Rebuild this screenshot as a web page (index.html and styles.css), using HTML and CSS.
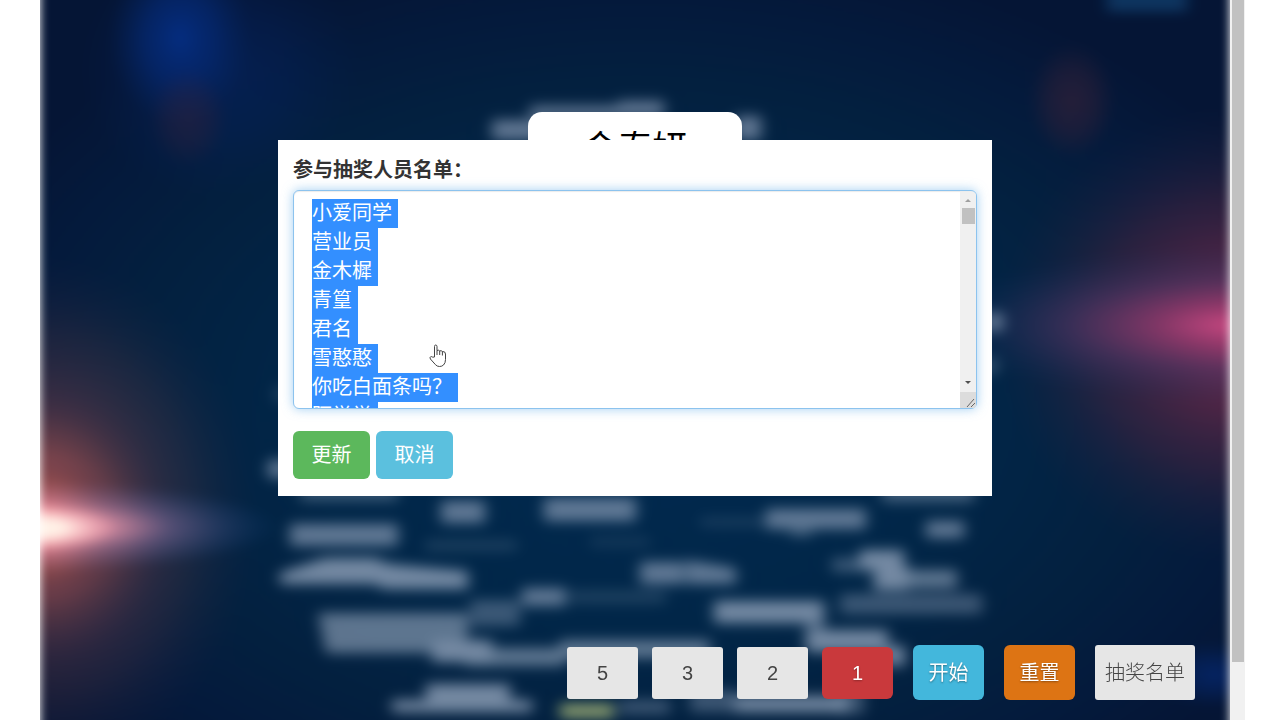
FILE: index.html
```html
<!DOCTYPE html>
<html lang="zh-CN">
<head>
    <meta charset="utf-8">
    <title>抽奖</title>
    <link rel="stylesheet" href="styles.css">
</head>
<body>

<div class="page">
    <main class="stage">
        <div class="scene">
            <svg class="scene-art" viewBox="40 -20 1190 760" preserveAspectRatio="none" aria-hidden="true">
                <defs>
                    <filter id="soft" x="-10%" y="-10%" width="120%" height="120%">
                        <feGaussianBlur stdDeviation="6 5"/>
                    </filter>
                    <radialGradient id="sky" cx="0.5" cy="0.57" r="0.62">
                        <stop offset="0" stop-color="#012a50"/>
                        <stop offset="0.45" stop-color="#012648"/>
                        <stop offset="0.7" stop-color="#03203f"/>
                        <stop offset="0.85" stop-color="#041a3c"/>
                        <stop offset="1" stop-color="#051535"/>
                    </radialGradient>
                    <radialGradient id="blue">
                        <stop offset="0" stop-color="#052d80"/>
                        <stop offset="0.5" stop-color="#052870" stop-opacity="0.7"/>
                        <stop offset="1" stop-color="#052560" stop-opacity="0"/>
                    </radialGradient>
                    <radialGradient id="rust">
                        <stop offset="0" stop-color="#3a2238" stop-opacity="0.6"/>
                        <stop offset="0.5" stop-color="#3a2238" stop-opacity="0.4"/>
                        <stop offset="1" stop-color="#3a2238" stop-opacity="0"/>
                    </radialGradient>
                    <radialGradient id="ember">
                        <stop offset="0" stop-color="#ff7a68"/>
                        <stop offset="0.2" stop-color="#e0685c" stop-opacity="0.8"/>
                        <stop offset="0.4" stop-color="#a85050" stop-opacity="0.6"/>
                        <stop offset="0.7" stop-color="#704045" stop-opacity="0.35"/>
                        <stop offset="1" stop-color="#302844" stop-opacity="0"/>
                    </radialGradient>
                    <radialGradient id="streak">
                        <stop offset="0" stop-color="#ff9cb0"/>
                        <stop offset="0.3" stop-color="#d07890" stop-opacity="0.8"/>
                        <stop offset="0.55" stop-color="#6c5584" stop-opacity="0.5"/>
                        <stop offset="1" stop-color="#1c3c74" stop-opacity="0"/>
                    </radialGradient>
                    <radialGradient id="core">
                        <stop offset="0" stop-color="#fffaf0"/>
                        <stop offset="0.4" stop-color="#ffeee4"/>
                        <stop offset="1" stop-color="#ff9cac" stop-opacity="0"/>
                    </radialGradient>
                    <radialGradient id="rose">
                        <stop offset="0" stop-color="#902c54"/>
                        <stop offset="0.3" stop-color="#682848" stop-opacity="0.75"/>
                        <stop offset="0.6" stop-color="#4a2440" stop-opacity="0.5"/>
                        <stop offset="1" stop-color="#1c2040" stop-opacity="0"/>
                    </radialGradient>
                    <radialGradient id="beam">
                        <stop offset="0" stop-color="#c84880"/>
                        <stop offset="0.25" stop-color="#a04078" stop-opacity="0.65"/>
                        <stop offset="0.55" stop-color="#503868" stop-opacity="0.55"/>
                        <stop offset="1" stop-color="#14305c" stop-opacity="0"/>
                    </radialGradient>
                </defs>

                <rect x="40" y="-20" width="1190" height="760" fill="url(#sky)"/>
                <ellipse cx="220" cy="70" rx="140" ry="130" fill="url(#blue)" opacity="0.35"/>
                <ellipse cx="180" cy="38" rx="72" ry="88" fill="url(#blue)"/>
                <ellipse cx="188" cy="118" rx="40" ry="50" fill="url(#rust)" opacity="0.7"/>
                <ellipse cx="1072" cy="101" rx="44" ry="58" fill="url(#rust)"/>
                <ellipse cx="1215" cy="675" rx="60" ry="34" fill="url(#blue)" opacity="0.6"/>
                <rect x="1107" y="-14" width="80" height="26" fill="#113560" filter="url(#soft)"/>

                <ellipse cx="40" cy="515" rx="220" ry="260" fill="url(#ember)" opacity="0.6"/>
                <ellipse cx="40" cy="525" rx="130" ry="140" fill="url(#ember)" opacity="0.7"/>
                <ellipse cx="40" cy="527" rx="84" ry="70" fill="url(#ember)"/>
                <ellipse class="light" cx="40" cy="527" rx="240" ry="46" fill="url(#streak)"/>
                <ellipse cx="30" cy="528" rx="88" ry="24" fill="url(#core)"/>
                <ellipse cx="1240" cy="335" rx="250" ry="230" fill="url(#rose)"/>
                <ellipse cx="1235" cy="325" rx="300" ry="80" fill="url(#beam)"/>

                <!-- names floating on the sphere -->
                <g fill="#8ea0b8" filter="url(#soft)">
                    <g opacity="0.68">
                        <rect x="492" y="120" width="50" height="20"/>
                        <rect x="530" y="106" width="90" height="12"/>
                        <rect x="618" y="101" width="46" height="16"/>
                        <rect x="735" y="116" width="26" height="24"/>
                        <rect x="985" y="313" width="18" height="18"/>
                        <rect x="985" y="358" width="12" height="16" opacity="0.6"/>
                        <rect x="268" y="460" width="20" height="18"/>
                        <rect x="275" y="386" width="10" height="16" opacity="0.4"/>
                        <rect x="290" y="524" width="108" height="22"/>
                        <rect x="300" y="486" width="98" height="15" opacity="0.6"/>
                        <rect x="441" y="501" width="44" height="22"/>
                        <rect x="544" y="498" width="92" height="23"/>
                        <rect x="766" y="509" width="100" height="20"/>
                        <rect x="790" y="525" width="22" height="12" opacity="0.6"/>
                        <rect x="882" y="484" width="92" height="18" opacity="0.7"/>
                        <rect x="926" y="521" width="38" height="17"/>
                        <rect x="640" y="562" width="44" height="22"/>
                        <path d="M686 560l50 8v16h-50z"/>
                        <rect x="522" y="588" width="44" height="18"/>
                    </g>
                    <g opacity="0.82">
                        <path d="M280 573l45-15h55v26h-100z"/>
                        <path d="M368 560l30 5 70 6v18h-85l-15-10z"/>
                        <rect x="860" y="550" width="44" height="18"/>
                        <rect x="874" y="566" width="34" height="24"/>
                        <rect x="905" y="570" width="52" height="18" opacity="0.8"/>
                        <rect x="714" y="601" width="110" height="22"/>
                        <rect x="806" y="620" width="18" height="20" opacity="0.6"/>
                        <path d="M318 613h150v24l-22 16H326z" opacity="0.8"/>
                        <rect x="432" y="640" width="60" height="22"/>
                        <rect x="465" y="648" width="100" height="18" opacity="0.8"/>
                        <rect x="560" y="640" width="150" height="18" opacity="0.8"/>
                        <rect x="806" y="630" width="82" height="22"/>
                        <rect x="885" y="646" width="20" height="20"/>
                        <rect x="426" y="684" width="84" height="24"/>
                        <rect x="392" y="700" width="140" height="12"/>
                        <rect x="735" y="696" width="112" height="16"/>
                    </g>
                    <g opacity="0.42">
                        <rect x="840" y="594" width="142" height="20"/>
                        <rect x="832" y="558" width="40" height="14"/>
                        <rect x="470" y="600" width="50" height="26"/>
                        <rect x="425" y="540" width="92" height="11" opacity="0.5"/>
                        <rect x="590" y="536" width="60" height="12" opacity="0.3"/>
                        <rect x="570" y="590" width="96" height="14" opacity="0.5"/>
                        <rect x="700" y="517" width="66" height="10" opacity="0.4"/>
                        <rect x="620" y="700" width="50" height="14"/>
                        <rect x="690" y="690" width="46" height="22"/>
                        <rect x="838" y="690" width="26" height="24"/>
                    </g>
                    <rect x="560" y="704" width="54" height="14" fill="#8ea070"/>
                </g>
            </svg>
        </div>

        <div class="winner">金泰妍</div>

        <form class="dialog">
            <label for="names">参与抽奖人员名单：</label>
            <div class="names-box">
                <textarea id="names" class="names" spellcheck="false">小爱同学
营业员
金木樨
青篁
君名
雪憨憨
你吃白面条吗？
陌学学
</textarea>
                <div class="bar" aria-hidden="true">
                    <span class="arrow-up"></span>
                    <span class="thumb"></span>
                    <span class="arrow-down"></span>
                    <svg class="grip" viewBox="0 0 16 16"><path d="M7 15l7-8M11 15l4-4" fill="none" stroke="#666"/></svg>
                </div>
            </div>
            <div class="dialog-buttons">
                <button type="button" class="btn btn-update">更新</button>
                <button type="button" class="btn btn-cancel">取消</button>
            </div>
        </form>

        <svg class="pointer" viewBox="0 0 18 24" aria-hidden="true">
            <path d="M5.500 13V2.500q0-1.500 1.200-1.500t1.300 1.500V6.500q1.500-.8 2.700.4 1.500-.7 2.700.6 3-.3 3.100 2.500V15.500q0 3.500-2 5.500-1.500 1.500-4 1.500t-4-1.800L1.400 15q-.9-1.600.2-2.200t2.200.4z" fill="#fff" stroke="#444"/>
            <path d="M8 6.500v4.500M10.700 7v4M13.400 7.500v4" fill="none" stroke="#444"/>
        </svg>

        <div class="tools">
            <div class="counts">
                <button type="button" class="count">5</button>
                <button type="button" class="count">3</button>
                <button type="button" class="count">2</button>
                <button type="button" class="count active">1</button>
            </div>
            <button type="button" class="tool start">开始</button>
            <button type="button" class="tool reset">重置</button>
            <button type="button" class="tool list">抽奖名单</button>
        </div>
    </main>
    <div class="page-bar" aria-hidden="true"><span></span></div>
</div>

<script>
    var names = document.getElementById('names');
    names.focus();
    names.select();
    names.scrollTop = 0;
</script>
</body>
</html>
```
FILE: styles.css
```css
* {
    box-sizing: border-box;
}

body {
    margin: 0;
    background: #fff;
}

body, button, textarea {
    font-family: "Liberation Sans", "Noto Sans CJK SC", sans-serif;
    font-size: 20px;
    line-height: 28px;
}

.page {
    display: flex;
    min-height: 100vh;
    padding: 0 35px 0 40px;
}

.stage {
    position: relative;
    flex: 1;
    display: flex;
    flex-direction: column;
    align-items: center;
    overflow: hidden;
}

/* blurred backdrop */
.scene {
    position: absolute;
    top: -20px;
    right: 0;
    bottom: -20px;
    left: 0;
    filter: blur(5px);
}

.scene-art {
    display: block;
    width: 100%;
    height: 100%;
}

.light {
    mix-blend-mode: screen;
}

.winner {
    position: relative;
    width: 214px;
    height: 76px;
    margin-top: 112px;
    border-radius: 14px;
    background: #fff;
    color: #000;
    font-size: 35px;
    line-height: 74px;
    text-align: center;
}

/* name list dialog */
.dialog {
    position: absolute;
    top: 140px;
    left: 20%;
    width: 60%;
    padding: 16px 15px 17px;
    background: #fff;
}

.dialog label {
    display: block;
    margin-bottom: 6px;
    color: #333;
    font-weight: bold;
}

.names-box {
    position: relative;
    height: 219px;
    margin-bottom: 22px;
}

.names {
    display: block;
    width: 100%;
    height: 100%;
    padding: 8px 18px;
    border: 1px solid #8cc3ee;
    border-radius: 6px;
    outline: 0;
    box-shadow: inset 0 1px 1px rgba(0, 0, 0, .08), 0 0 11px rgba(102, 175, 233, .6);
    color: #555;
    line-height: 29px;
    resize: none;
    scrollbar-width: none;
}

.names::selection {
    background: #338fff;
    color: #fff;
}

.bar {
    position: absolute;
    top: 2px;
    right: 1px;
    bottom: 1px;
    display: flex;
    flex-direction: column;
    align-items: center;
    width: 16px;
    border-radius: 0 4px 4px 0;
    background: #f0f0f0;
    overflow: hidden;
}

.arrow-up, .arrow-down {
    border: 3px solid transparent;
}

.arrow-up {
    margin: 4px 0 6px;
    border-bottom-color: #a0a0a0;
}

.thumb {
    width: 13px;
    height: 16px;
    background: #c1c1c1;
}

.arrow-down {
    margin: auto 0 5px;
    border-top-color: #505050;
}

.grip {
    width: 16px;
    height: 16px;
    background: #dcdcdc;
}

.dialog-buttons {
    display: flex;
    gap: 6px;
}

.btn {
    width: 77px;
    height: 48px;
    padding: 0;
    border: 0;
    border-radius: 6px;
    background: #5cb85c;
    color: #fff;
}

.btn-cancel {
    background: #5bc0de;
}

.pointer {
    position: absolute;
    top: 344px;
    left: 389px;
    width: 18px;
    height: 24px;
}

/* bottom toolbar */
.tools {
    position: relative;
    display: flex;
    align-items: center;
    align-self: flex-end;
    gap: 20px;
    margin-top: auto;
    padding: 0 35px 20px 0;
}

.counts {
    display: flex;
    gap: 14px;
}

.count, .tool {
    width: 71px;
    height: 52px;
    padding: 0;
    border: 0;
    border-radius: 3px;
    background: #e6e6e6;
    color: #444;
}

.count.active {
    border-radius: 6px;
    background: #c9393c;
    color: #fff;
    text-shadow: 0 1px 2px rgba(0, 0, 0, .3);
}

.tool {
    height: 55px;
    border-radius: 6px;
}

.start, .reset {
    color: #fff;
    text-shadow: 0 1px 2px rgba(0, 0, 0, .4);
}

.start {
    background: #43b7dc;
}

.reset {
    background: #dd7414;
}

.list {
    width: 100px;
    border-radius: 3px;
    font-weight: 300;
}

/* page scrollbar */
.page-bar {
    width: 15px;
    padding: 0 1px 0 2px;
    background: #f1f1f1;
}

.page-bar span {
    display: block;
    height: 92vh;
    background: #c1c1c1;
}
```
